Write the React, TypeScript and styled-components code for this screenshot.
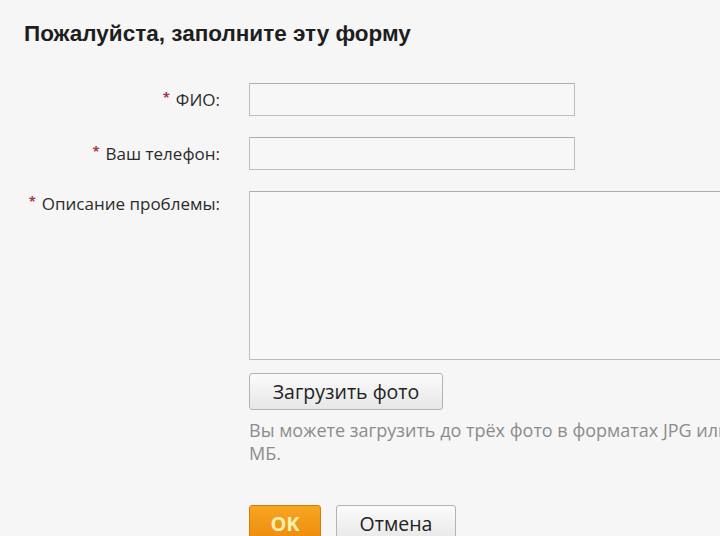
import styled, { createGlobalStyle } from 'styled-components';

const GlobalStyle = createGlobalStyle`
  html, body {
    margin: 0;
    padding: 0;
    background: #f6f6f6;
    overflow: hidden;
  }
  body {
    font-family: 'Open Sans', 'Liberation Sans', sans-serif;
    color: #333;
  }
`;

interface FieldRowProps {
  label: string;
  children: React.ReactNode;
  $top?: boolean;
}

function FieldRow({ label, children, $top }: FieldRowProps) {
  return (
    <Row $top={$top}>
      <Label $top={$top}>
        <Star>*</Star>
        {label}
      </Label>
      {children}
    </Row>
  );
}

export default function App() {
  return (
    <Page>
      <GlobalStyle />
      <Title>Пожалуйста, заполните эту форму</Title>

      <Form>
        <FieldRow label="ФИО:">
          <TextInput type="text" />
        </FieldRow>
        <FieldRow label="Ваш телефон:">
          <TextInput type="tel" />
        </FieldRow>
        <FieldRow label="Описание проблемы:" $top>
          <TextArea />
        </FieldRow>

        <Row>
          <span />
          <UploadBlock>
            <GreyButton type="button">Загрузить фото</GreyButton>
            <HelpText>
              Вы можете загрузить до трёх фото в форматах JPG или PNG размером до 5
              <br />
              МБ.
            </HelpText>
          </UploadBlock>
        </Row>

        <Row>
          <span />
          <Actions>
            <OkButton type="submit">OK</OkButton>
            <GreyButton type="button" $wide>Отмена</GreyButton>
          </Actions>
        </Row>
      </Form>
    </Page>
  );
}

const Page = styled.div`
  padding: 20px 0 0 24px;
  width: 900px;
  border-left: 5px solid #fbfbfb;
  margin-left: -5px;
`;

const Title = styled.h1`
  margin: 0 0 35px;
  font-family: 'Liberation Sans', Arial, sans-serif;
  font-size: 22.5px;
  font-weight: 700;
  color: #1e1e1e;
  line-height: 28px;
`;

const Form = styled.form`
  display: flex;
  flex-direction: column;
  gap: 21px;
`;

const Row = styled.div<{ $top?: boolean }>`
  display: grid;
  grid-template-columns: 196px auto;
  column-gap: 29px;
  align-items: ${(p) => (p.$top ? 'start' : 'center')};
  justify-items: start;
`;

const Label = styled.label<{ $top?: boolean }>`
  justify-self: end;
  display: flex;
  align-items: flex-start;
  gap: 6px;
  font-size: 17px;
  line-height: 22px;
  color: #2b2b2b;
  white-space: nowrap;
  padding-top: ${(p) => (p.$top ? '2px' : '0')};
`;

const Star = styled.span`
  color: #a8334f;
  font-size: 13px;
  line-height: 16px;
  font-weight: 700;
`;

const TextInput = styled.input`
  box-sizing: border-box;
  width: 326px;
  height: 33px;
  border: 1px solid #bdbdbd;
  border-top-color: #adadad;
  background: #f7f7f7;
  margin: 0;
`;

const TextArea = styled.textarea`
  box-sizing: border-box;
  width: 500px;
  height: 169px;
  border: 1px solid #bdbdbd;
  border-top-color: #adadad;
  background: #f8f8f8;
  resize: none;
  margin: 0;
  display: block;
`;

const UploadBlock = styled.div`
  display: flex;
  flex-direction: column;
  align-items: flex-start;
  margin-top: -8px;
`;

const HelpText = styled.p`
  margin: 9px 0 0;
  font-size: 18px;
  line-height: 23px;
  color: #8c8c8c;
  white-space: nowrap;
`;

const GreyButton = styled.button<{ $wide?: boolean }>`
  box-sizing: border-box;
  height: 37px;
  padding: 0 ${(p) => (p.$wide ? '22px' : '20px')};
  min-width: ${(p) => (p.$wide ? '120px' : '194px')};
  font-family: 'Open Sans', 'Liberation Sans', sans-serif;
  font-size: 19.5px;
  color: #222;
  background: linear-gradient(#fbfbfb, #e7e7e7);
  border: 1px solid #b3b3b3;
  border-radius: 3px;
  cursor: pointer;
`;

const Actions = styled.div`
  display: flex;
  gap: 15px;
  margin-top: 19px;
`;

const OkButton = styled.button`
  box-sizing: border-box;
  width: 72px;
  height: 37px;
  font-family: 'Open Sans', 'Liberation Sans', sans-serif;
  font-size: 20px;
  font-weight: 700;
  color: #fff1b0;
  background: linear-gradient(#f8a621, #ec8a0c);
  border: 1px solid #d87c08;
  border-radius: 3px;
  cursor: pointer;
`;
